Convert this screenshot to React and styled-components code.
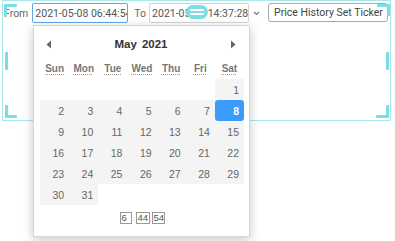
import React from "react";
import styled, { createGlobalStyle } from "styled-components";

const GlobalStyle = createGlobalStyle`
  html, body { margin: 0; padding: 0; background: #fff; }
  body { width: 395px; height: 241px; overflow: hidden; font-family: Roboto, "Open Sans", sans-serif; }
`;

const Stage = styled.div`
  position: relative;
  width: 395px;
  height: 241px;
`;

const Toolbar = styled.div`
  display: flex;
  align-items: center;
  padding: 3px 0 0 4px;
  height: 20px;
  font-size: 10.5px;
  color: #666;
`;

const Label = styled.span`
  margin-right: ${(p) => p.$gap}px;
  white-space: nowrap;
`;

const DateBox = styled.div`
  box-sizing: border-box;
  flex: none;
  width: ${(p) => p.$w}px;
  height: 20px;
  border: 1px solid ${(p) => (p.$focused ? "#5ea8ea" : "#d4d4d4")};
  border-radius: 2px;
  padding: 0 0 0 2px;
  overflow: hidden;
  white-space: nowrap;
  display: flex;
  align-items: center;
  color: #555;
  margin-right: ${(p) => p.$gap}px;
`;

const Chevron = styled.svg`
  width: 7px;
  height: 5px;
  margin: 0 8px 0 4px;
  flex: none;
`;

const TickerBox = styled.div`
  box-sizing: border-box;
  height: 19px;
  margin-top: -1px;
  border: 1px solid #aaa;
  border-radius: 3px;
  padding: 0 4px 0 5px;
  display: flex;
  align-items: center;
  color: #444;
  white-space: nowrap;
`;

const Frame = styled.div`
  position: absolute;
  left: 2px;
  top: 0;
  width: 389px;
  height: 121px;
  box-sizing: border-box;
  border: 1px solid #a9e7eb;
  pointer-events: none;
`;

const Handle = styled.div`
  position: absolute;
  background: #7cdee4;
  left: ${(p) => p.$x}px;
  top: ${(p) => p.$y}px;
  width: ${(p) => p.$w}px;
  height: ${(p) => p.$h}px;
  border-radius: 1px;
`;

const Pill = styled.div`
  position: absolute;
  left: 186px;
  top: 5px;
  width: 22px;
  height: 14px;
  border-radius: 7px;
  background: #7cdee4;
  display: flex;
  flex-direction: column;
  justify-content: center;
  align-items: center;
  gap: 2px;
  &::before, &::after {
    content: "";
    width: 14px;
    height: 2px;
    background: #fff;
    border-radius: 1px;
  }
`;

const Popup = styled.div`
  position: absolute;
  left: 33px;
  top: 25px;
  width: 217px;
  height: 212px;
  box-sizing: border-box;
  background: #fff;
  border: 1px solid #d6d6d6;
  box-shadow: 0 3px 10px rgba(0, 0, 0, 0.22);
  padding: 8px 5px 0 6px;
  font-family: "Liberation Sans", Arial, sans-serif;
  z-index: 2;
`;

const Header = styled.div`
  display: flex;
  align-items: center;
  justify-content: space-between;
  height: 20px;
  padding: 0 8px 0 6px;
`;

const Arrow = styled.svg`
  width: 6px;
  height: 9px;
`;

const Title = styled.div`
  display: flex;
  gap: 5px;
  font-weight: bold;
  font-size: 11.5px;
  color: #333;
`;

const Weekdays = styled.div`
  display: grid;
  grid-template-columns: repeat(7, 1fr);
  width: 204px;
  height: 20px;
  margin-top: 4px;
  align-items: center;
`;

const Weekday = styled.abbr`
  text-align: center;
  font-size: 10px;
  font-weight: bold;
  color: #777;
  text-decoration: underline dotted #999;
  text-underline-offset: 2px;
`;

const Days = styled.div`
  display: grid;
  grid-template-columns: repeat(7, 1fr);
  grid-auto-rows: 21px;
  width: 204px;
  margin-top: 1px;
`;

const Day = styled.div`
  background: ${(p) => (p.$empty ? "transparent" : p.$selected ? "#3a9cf8" : "#f4f4f4")};
  color: ${(p) => (p.$selected ? "#fff" : "#666")};
  font-weight: ${(p) => (p.$selected ? "bold" : "normal")};
  border-radius: ${(p) => (p.$selected ? "3px" : "0")};
  font-size: 10.5px;
  display: flex;
  align-items: center;
  justify-content: flex-end;
  padding-right: 5px;
`;

const TimeRow = styled.div`
  display: flex;
  justify-content: center;
  align-items: center;
  margin-top: 7px;
  height: 12px;
  font-size: 9.5px;
  color: #555;
`;

const TimeField = styled.div`
  box-sizing: border-box;
  width: ${(p) => p.$w}px;
  height: 12px;
  border: 1px solid #999;
  display: flex;
  align-items: center;
  padding-left: 1px;
  line-height: 1;
`;

const Colon = styled.span`
  color: #c9a8a8;
  width: ${(p) => p.$w}px;
  text-align: center;
  font-size: 8px;
`;

const weekdays = [
  ["Sun", "Sunday"],
  ["Mon", "Monday"],
  ["Tue", "Tuesday"],
  ["Wed", "Wednesday"],
  ["Thu", "Thursday"],
  ["Fri", "Friday"],
  ["Sat", "Saturday"],
];

export default function App() {
  const cells = [];
  for (let i = 0; i < 6; i++) cells.push(null);
  for (let d = 1; d <= 31; d++) cells.push(d);

  return (
    <Stage>
      <GlobalStyle />
      <Toolbar>
        <Label $gap={4}>From</Label>
        <DateBox $w={96} $focused $gap={6}>2021-05-08 06:44:54</DateBox>
        <Label $gap={3}>To</Label>
        <DateBox $w={100} $gap={0}>2021-05-08 14:37:28</DateBox>
        <Chevron viewBox="0 0 7 5">
          <path d="M1 1 L3.5 3.5 L6 1" fill="none" stroke="#777" strokeWidth="1.2" />
        </Chevron>
        <TickerBox>Price History Set Ticker</TickerBox>
      </Toolbar>

      <Frame />
      <Handle $x={4} $y={4} $w={13} $h={3} />
      <Handle $x={4} $y={4} $w={3} $h={12} />
      <Handle $x={377} $y={4} $w={13} $h={3} />
      <Handle $x={387} $y={4} $w={3} $h={12} />
      <Handle $x={5} $y={52} $w={3} $h={18} />
      <Handle $x={386} $y={52} $w={3} $h={18} />
      <Handle $x={5} $y={105} $w={3} $h={13} />
      <Handle $x={5} $y={115} $w={12} $h={3} />
      <Handle $x={386} $y={105} $w={3} $h={13} />
      <Handle $x={376} $y={115} $w={13} $h={3} />
      <Pill />

      <Popup>
        <Header>
          <Arrow viewBox="0 0 6 9">
            <path d="M5 0.5 L0.5 4.5 L5 8.5 Z" fill="#666" />
          </Arrow>
          <Title>
            <span>May</span>
            <span>2021</span>
          </Title>
          <Arrow viewBox="0 0 6 9">
            <path d="M1 0.5 L5.5 4.5 L1 8.5 Z" fill="#666" />
          </Arrow>
        </Header>
        <Weekdays>
          {weekdays.map(([s, l]) => (
            <Weekday key={s} title={l}>{s}</Weekday>
          ))}
        </Weekdays>
        <Days>
          {cells.map((d, i) => (
            <Day key={i} $empty={d === null} $selected={d === 8}>
              {d}
            </Day>
          ))}
        </Days>
        <TimeRow>
          <TimeField $w={12}>6</TimeField>
          <Colon $w={4}>:</Colon>
          <TimeField $w={14}>44</TimeField>
          <Colon $w={2}>:</Colon>
          <TimeField $w={13}>54</TimeField>
        </TimeRow>
      </Popup>
    </Stage>
  );
}
